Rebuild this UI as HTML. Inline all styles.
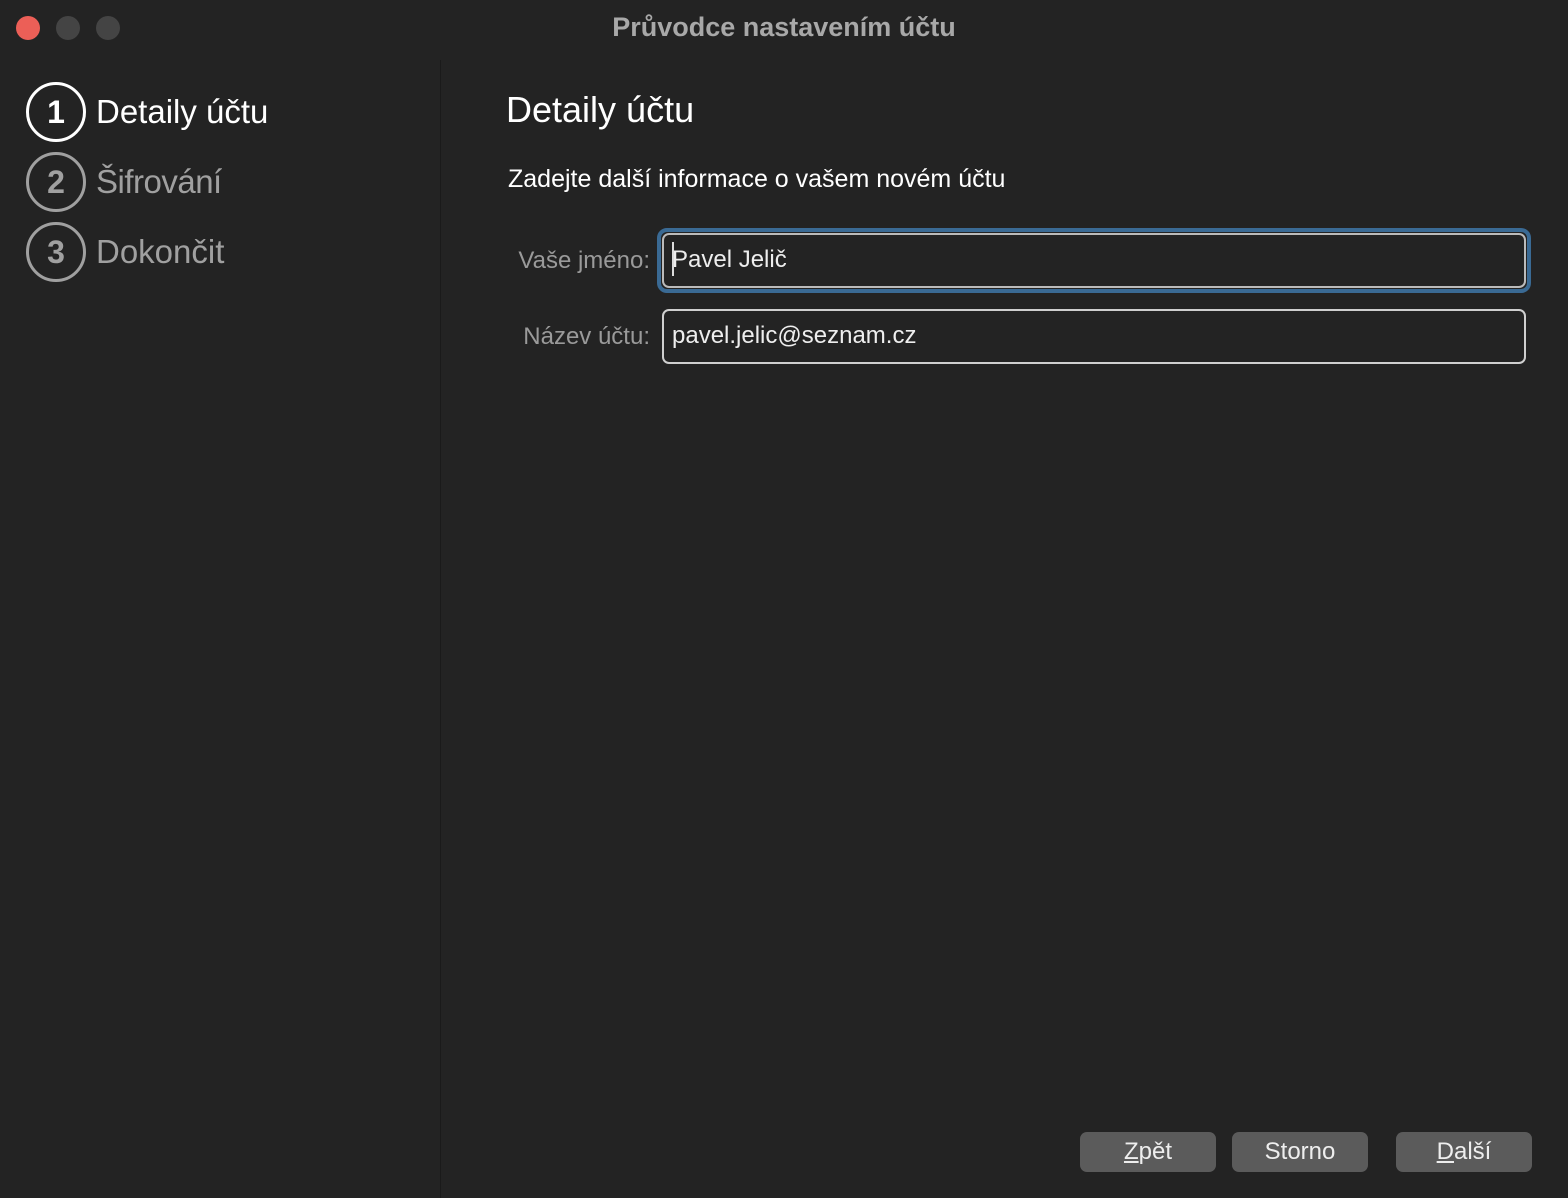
<!DOCTYPE html>
<html><head><meta charset="utf-8"><style>
*{margin:0;padding:0;box-sizing:border-box}
body{width:1568px;height:1198px;background:#232323;font-family:"Liberation Sans",sans-serif;position:relative;overflow:hidden;color:#fff}
.a{position:absolute}
.dot{position:absolute;top:16px;width:24px;height:24px;border-radius:50%}
.circ{position:absolute;left:26px;width:60px;height:60px;border-radius:50%;border:3px solid #a0a0a0;color:#a0a0a0;font-size:32px;font-weight:bold;text-align:center;line-height:54px}
.step{position:absolute;left:96px;font-size:33px;color:#a0a0a0}
.lbl{position:absolute;font-size:24px;color:#9a9a9a;text-align:right;width:150px;left:500px}
.inp{position:absolute;left:662px;width:864px;height:55px;border:2px solid #cfcfcf;border-radius:7px;font-size:24px;color:#eee;padding-left:8px;line-height:50px}
.btn{position:absolute;top:1132px;width:136px;height:40px;background:#5b5b5b;border-radius:7px;font-size:24px;color:#eee;text-align:center;line-height:40px}
</style></head><body>
<div class="dot" style="left:16px;background:#ec5f57"></div>
<div class="dot" style="left:56px;background:#444"></div>
<div class="dot" style="left:96px;background:#444"></div>
<div class="a" style="left:0;width:1568px;top:12px;text-align:center;font-size:27px;font-weight:bold;color:#a8a8a8">Průvodce nastavením účtu</div>
<div class="a" style="left:440px;top:60px;width:1px;height:1138px;background:#1a1a1a"></div>
<div class="circ" style="top:82px;border-color:#fff;color:#fff">1</div>
<div class="step" style="top:93px;color:#fff">Detaily účtu</div>
<div class="circ" style="top:152px">2</div>
<div class="step" style="top:163px;letter-spacing:-0.5px">Šifrování</div>
<div class="circ" style="top:222px">3</div>
<div class="step" style="top:233px">Dokončit</div>
<div class="a" style="left:506px;top:89px;font-size:36px;color:#fff">Detaily účtu</div>
<div class="a" style="left:508px;top:165px;font-size:25px;color:#fff">Zadejte další informace o vašem novém účtu</div>
<div class="lbl" style="top:247px">Vaše jméno:</div>
<div class="a" style="left:657px;top:228px;width:874px;height:65px;border:4px solid #3a6a94;border-radius:10px"></div>
<div class="inp" style="top:233px;border-color:#bbb">Pavel Jelič</div>
<div class="a" style="left:672px;top:242px;width:2px;height:34px;background:#ddd"></div>
<div class="lbl" style="top:323px">Název účtu:</div>
<div class="inp" style="top:309px">pavel.jelic@seznam.cz</div>
<div class="btn" style="left:1080px"><u>Z</u>pět</div>
<div class="btn" style="left:1232px">Storno</div>
<div class="btn" style="left:1396px"><u>D</u>alší</div>
</body></html>
